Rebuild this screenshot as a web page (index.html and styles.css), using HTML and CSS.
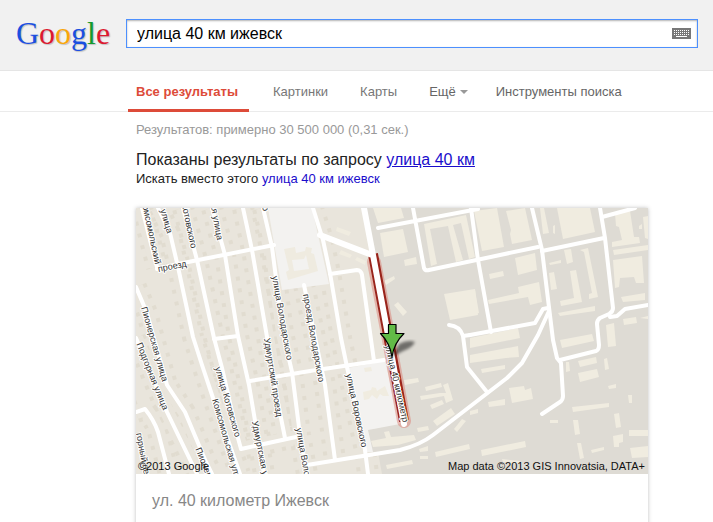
FILE: index.html
```
<!DOCTYPE html>
<html lang="ru">
<head>
  <meta charset="UTF-8">
  <meta name="viewport" content="width=device-width, initial-scale=1.0">
  <title>улица 40 км ижевск - Поиск в Google</title>
  <link rel="stylesheet" href="styles.css">
</head>
<body>

  <header class="header">
    <a href="#" class="logo" aria-label="Google"><span class="blue">G</span><span class="red">o</span><span class="yellow">o</span><span class="blue">g</span><span class="green">l</span><span class="red">e</span></a>
    <form class="search">
      <input type="text" class="search__input" name="q" value="улица 40 км ижевск" aria-label="Поиск">
      <button type="button" class="search__keyboard" aria-label="Экранная клавиатура">
        <svg width="19" height="11" viewBox="0 0 19 11">
          <rect width="19" height="11" fill="#777"/>
          <path d="M2 2.5h15M2 4.5h15M2 6.5h15" stroke="#fff" stroke-dasharray="1 1"/>
          <path d="M4 8.5h11" stroke="#fff"/>
        </svg>
      </button>
    </form>
  </header>

  <nav class="tabs">
    <a href="#" class="tab tab--active">Все результаты</a>
    <a href="#" class="tab">Картинки</a>
    <a href="#" class="tab">Карты</a>
    <button type="button" class="tab tab--more">Ещё<span class="caret"></span></button>
    <button type="button" class="tab tab--tools">Инструменты поиска</button>
  </nav>

  <main class="results">
    <p class="stats">Результатов: примерно 30 500 000 (0,31 сек.)</p>
    <p class="shown">Показаны результаты по запросу <a href="#">улица 40 км</a></p>
    <p class="instead">Искать вместо этого <a href="#">улица 40 км ижевск</a></p>

    <section class="card">
      <svg class="map" viewBox="136 208 512 266" role="img" aria-label="Карта">
        <defs>
          <filter id="soft"><feGaussianBlur stdDeviation="1.5"/></filter>
          <!-- жилые улицы -->
          <g id="streets">
            <path d="M142 208L150 240L157 267"/>
            <path d="M158 208L170 233L178 267L193 337L202 365L213 398L240 474"/>
            <path d="M183 208L197 260L214 338L222 368L238 438L241 449L296 437"/>
            <path d="M212 208L225 255L238 336L249 385L264 474"/>
            <path d="M243 208L252 250L267 337L277 398L285 438"/>
            <path d="M263 208L272 247L283 333L292 372L300 435L307 474"/>
            <path d="M304 285L325 385L335 460"/>
            <path d="M313 208L323 240L330 273L341 338L347 367L365 450L368 474"/>
            <path d="M136 287L147 313L153 335L167 385L185 412L206 462L212 474"/>
            <path d="M136 338L167 412L197 474"/>
            <path d="M136 412L145 409Q154 420 158 432L169 474"/>
          </g>
        </defs>

        <rect x="136" y="208" width="512" height="266" fill="#e9e5dc"/>

        <!-- дома вдоль улиц -->
        <use href="#streets" class="houses"/>
        <use href="#streets" class="verge"/>

        <!-- промзона и светлые кварталы -->
        <path d="M364 208H648V474H382L378 452H371L368 430L400 423L372 256Z" fill="#dedbd4"/>
        <path d="M268 208H312L329 284L282 290Z" fill="#f3f2f0"/>
        <path d="M348 368L385 361L400 424L368 430L373 452H365Z" fill="#f3f2f0"/>
        <path d="M284 249L295 247L296 253L305 251L306 247L312 248L311 253L314 254L318 271L288 280L286 272L289 270ZM292 260L294 271L309 269L306 255L304 259Z" fill="#efebe0" fill-rule="evenodd"/>

        <!-- здания -->
        <g fill="#f0ece0">
          <path d="M373 208L378 223L404 218L401 208Z"/>
          <path d="M380 233L403 229L408 252L384 257Z"/>
          <path d="M337 227L351 232L349 236L336 231ZM341 250L352 255L350 258L339 254ZM357 257L366 261L365 265L355 260Z"/>
          <path d="M404 260L416 257L417 264L405 266ZM384 281L394 276L395 279L386 285ZM394 305L398 302L407 312L403 316Z"/>
          <path d="M424 224L466 215L475 257L469 259L461 223L453 225L463 260L456 262L448 226L430 229L437 264L431 266Z"/>
          <path d="M444 294L475 289L478 315L450 320Z"/>
          <path d="M474 211L497 208L504 247L482 251Z"/>
          <path d="M506 211L525 208L532 240L512 244L510 234L511 230Z"/>
          <path d="M540 208H544L549 233L543 234ZM553 226L555 225L555 234L553 233Z"/>
          <path d="M557 208H590L595 232L563 239Z"/>
          <path d="M615 213L630 211L634 237L639 237L640 243L612 247V242L622 240L619 227L616 226Z"/>
          <path d="M643 217L648 216V239L645 238ZM639 226L642 224V229L639 229Z"/>
          <path d="M613 250L648 245V250L614 255Z"/>
          <path d="M613 260L642 256L644 283H636L634 277L620 278L619 287L615 288Z"/>
          <path d="M621 297L645 293V300L623 302ZM623 319L636 317L637 323L624 325ZM640 318L648 316V319Z"/>
          <path d="M515 258L535 253L537 270L518 275ZM489 274L503 271L504 276L490 279Z"/>
          <path d="M518 287L539 282L542 302L530 305L528 297L489 304L488 300L519 293Z"/>
          <path d="M549 263L561 260V263L550 265ZM564 250L571 249L573 262L567 264ZM549 273L554 272L557 289L551 290Z"/>
          <path d="M570 271L576 270L582 302L561 306L560 301L574 298Z"/>
          <path d="M580 250L588 248L598 297L589 299V294L592 293L584 252Z"/>
          <path d="M558 313L595 306V311L560 316Z"/>
          <path d="M470 291L475 290L479 313L470 316Z"/>
          <path d="M470 338L518 328L520 338L470 348ZM470 355L518 346L519 357L506 358L470 363ZM481 369L505 365V369L482 373Z"/>
          <path d="M509 388L524 386L525 390L531 388L533 399L512 403ZM488 402L505 399V405L489 407ZM470 411L478 409V413L470 415Z"/>
          <path d="M560 340L592 334L594 341L562 348ZM606 325L614 323L616 346L608 347Z"/>
          <path d="M566 362L569 362L570 371L566 372ZM578 361L596 357L597 363L580 367ZM578 373L597 369L599 377L580 382ZM604 359L607 358L609 369L605 370Z"/>
          <path d="M572 407L609 403V407L573 412ZM608 386L616 384V388L609 389ZM628 395H632V403H629ZM550 420H558V423H550Z"/>
          <path d="M573 420L578 420L580 434L575 435ZM577 443L581 443L584 458L580 459ZM614 414L619 413L621 427L616 428ZM591 450L604 447V450L592 453Z"/>
          <path d="M613 436L623 434V442L619 443V447L614 447ZM629 430H648V436L629 436ZM630 448L648 446V457L632 458Z"/>
          <path d="M481 450L525 441L526 447L482 456ZM502 459L520 461L519 464L503 462Z"/>
          <path d="M425 387L441 383L442 387L426 391ZM420 396L440 393L446 393L443 385L448 383L453 400L446 403L444 396L421 400ZM430 405L442 400L444 404L432 409Z"/>
          <path d="M433 421L451 408L455 414L437 426ZM454 429L462 419L466 421L457 432ZM417 428L428 426L429 430L418 432Z"/>
          <path d="M404 380L418 378L419 382L405 385ZM371 441L386 438L384 432L389 431L391 437L414 435L416 440L398 445L373 447Z"/>
          <path d="M435 452L469 444L470 449L436 457ZM386 465L412 460L413 464L387 469ZM419 449L428 446V451L420 452ZM420 456H428V459H420Z"/>
          <path d="M363 392L371 390L372 387L376 388L377 391L385 386L389 396H383L380 394L377 399L372 395L369 399L364 400ZM364 368L371 367L372 371L365 372Z"/>
        </g>

        <!-- дороги -->
        <g class="road">
          <use href="#streets"/>
          <path d="M157 269L178 264L274 245"/>
          <path d="M214 339L238 336M250 381L310 371L384 360"/>
          <path d="M330 274L357 270Q361 270 362 275L374 361"/>
          <path d="M307 465L400 450Q420 445 433 435L507 378L522 363L538 335L549 311"/>
          <path d="M378 228L478 209M413 208L424 268Q425 271 429 270L538 247"/>
          <path d="M471 208L478 260L491 332"/>
          <path d="M532 208L542 250L553 340L557 358L561 363L563 396Q563 400 560 402L542 414"/>
          <path d="M542 251L604 238M600 208L605 238L613 308Q613 312 609 314L600 318Q597 320 597 324L599 345Q599 350 596 351L560 360"/>
          <path d="M602 217L635 208M610 317L617 316L625 309L648 305"/>
          <path d="M470 335L535 323L543 309L548 308"/>
          <path d="M449 325Q460 326 463 336L467 367L487 392M463 336L470 335"/>
        </g>

        <!-- найденная улица -->
        <path d="M374 262L388 335L404 421" class="found-glow"/>
        <path d="M373 254L388 335L404 421" class="found-edge"/>
        <path d="M364 208L373 255L388 335L404 424M320 235L372 255" class="road road--wide"/>

        <g class="street-name">
          <text class="to-end" transform="translate(158 264) rotate(78)">Комсомольский</text>
          <text transform="translate(158 269) rotate(-11)">проезд</text>
          <text class="to-end" transform="translate(170 233) rotate(74)">Комсомольская улица</text>
          <text class="to-end" transform="translate(194 248) rotate(78)">улица Котовского</text>
          <text class="to-end" transform="translate(220 240) rotate(80)">Удмуртская улица</text>
          <text class="to-end" transform="translate(266 211) rotate(80)">Володарского</text>
          <text transform="translate(275 276) rotate(80)">улица Володарского</text>
          <text transform="translate(306 294) rotate(80)">проезд Володарского</text>
          <text transform="translate(349 374) rotate(78)">улица Воровского</text>
          <text transform="translate(388 345) rotate(77)">улица 40 километр</text>
          <text transform="translate(144 307) rotate(74)">Пионерская улица</text>
          <text transform="translate(139 343) rotate(68)">Подгорная улица</text>
          <text transform="translate(218 367) rotate(74)">улица Котовского</text>
          <text transform="translate(215 399) rotate(74)">Комсомольская улица</text>
          <text transform="translate(267 338) rotate(81)">Удмуртский проезд</text>
          <text transform="translate(255 421) rotate(79)">Удмуртская улица</text>
          <text transform="translate(299 428) rotate(80)">улица Володарского</text>
          <text transform="translate(198 448) rotate(68)">Пионерская улица</text>
          <text transform="translate(139 433) rotate(79)">горный переулок</text>
        </g>

        <!-- маркер -->
        <path d="M392 357L399 344Q408 339 415 342Q412 348 403 351Z" fill="#000" opacity=".5" filter="url(#soft)"/>
        <path d="M388.500 324.500H396V333.500H404Q394 343 392 357Q390 343 380.500 333.500H388.500Z" fill="#62bb47" stroke="#000" stroke-width="1.200" stroke-linejoin="round"/>

        <g class="copyright">
          <text x="138" y="470">©2013 Google</text>
          <text x="645" y="470" class="to-end">Map data ©2013 GIS Innovatsia, DATA+</text>
        </g>
      </svg>
      <h2 class="card__title">ул. 40 километр Ижевск</h2>
    </section>
  </main>

</body>
</html>
```
FILE: styles.css
```
:root{
  --blue-link:#1a0dcc;
  --red:#dd4b39;
  --gray:#777;
  --left:136px;
}
*{margin:0;padding:0;box-sizing:border-box;}
body{background:#fff;color:#222;font-family:"Liberation Sans",Arial,sans-serif;font-size:13px;line-height:16px;}
html{overflow:hidden;}
a{color:var(--blue-link);text-decoration:none;}
button{border:0;background:none;font:inherit;color:inherit;cursor:pointer;}

/* Header */
.header{display:flex;align-items:flex-start;height:71px;padding:19px 15px 0 16px;background:#f1f1f1;border-bottom:1px solid #e5e5e5;}
.logo{flex:none;width:110px;font:32px/28px "Liberation Serif",serif;text-shadow:1px 1px 1px rgba(0,0,0,.2);}
.blue{color:#1b4fe0;}
.red{color:#dc1a30;}
.yellow{color:#f9a60a;}
.green{color:#149a2c;}
.search{display:flex;align-items:center;flex:1;height:29px;padding:0 6px 0 10px;background:#fff;border:1px solid #4d90fe;box-shadow:inset 0 1px 2px rgba(0,0,0,.3);}
.search__input{flex:1;min-width:0;border:0;outline:0;background:none;color:#000;font:16px/20px "Liberation Sans",Arial,sans-serif;}
.search__keyboard{display:flex;}

/* Tabs */
.tabs{display:flex;gap:16px;height:41px;padding-left:128px;border-bottom:1px solid #ebebeb;white-space:nowrap;}
.tab{height:41px;padding:0 8px;line-height:41px;color:var(--gray);}
.tab--active{min-width:121px;color:var(--red);font-weight:bold;border-bottom:3px solid var(--red);}
.tab--more{display:flex;align-items:center;gap:4px;padding:0 4px 0 8px;color:#666;}
.tab--tools{color:#666;}
.caret{border:4px solid transparent;border-top-color:#999;border-bottom:0;}

/* Results */
.results{padding:10px 16px 0 var(--left);}
.stats{color:#999;}
.shown{margin-top:12px;font-size:16px;line-height:20px;}
.shown a{text-decoration:underline;}
.instead{margin-top:1px;}

/* Map card */
.card{max-width:512px;margin-top:21px;box-shadow:0 0 4px rgba(0,0,0,.25);}
.card__title{padding:16px 16px 24px;color:#878787;font-size:16px;line-height:22px;font-weight:normal;}
.map{display:block;width:100%;}
.houses,.verge,.road{fill:none;stroke-linejoin:round;}
.houses{stroke:#e1dcd0;stroke-width:22;stroke-dasharray:4 8;}
.verge{stroke:#e9e5dc;stroke-width:14;}
.road{stroke:#fff;stroke-width:4;stroke-linecap:round;}
.road--wide{stroke-width:6;}
.found-glow,.found-edge{fill:none;}
.found-glow{stroke:#d9766a;stroke-width:14;stroke-linecap:round;opacity:.45;}
.found-edge{stroke:#99241b;stroke-width:10;}
.street-name{font-size:9px;fill:#333;stroke:#fff;stroke-width:2px;stroke-linejoin:round;paint-order:stroke;dominant-baseline:central;}
.copyright{font-size:11px;fill:#111;}
.to-end{text-anchor:end;}
```
